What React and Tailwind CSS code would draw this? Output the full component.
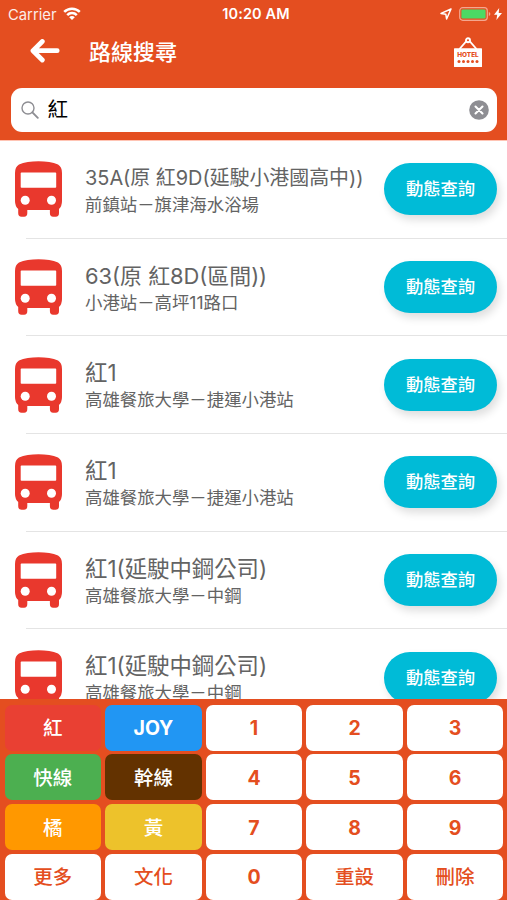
import React from "react";
import clsx from "clsx";

const routes = [
  { name: "35A(原 紅9D(延駛小港國高中))", ends: "前鎮站－旗津海水浴場", size: "text-[19.9px]" },
  { name: "63(原 紅8D(區間))", ends: "小港站－高坪11路口", size: "text-[21.9px]" },
  { name: "紅1", ends: "高雄餐旅大學－捷運小港站", size: "text-[22.4px]" },
  { name: "紅1", ends: "高雄餐旅大學－捷運小港站", size: "text-[22.4px]" },
  { name: "紅1(延駛中鋼公司)", ends: "高雄餐旅大學－中鋼", size: "text-[22.4px]" },
  { name: "紅1(延駛中鋼公司)", ends: "高雄餐旅大學－中鋼", size: "text-[22.4px]" },
];

const white = "bg-white text-[#e44e20]";

const keys = [
  { label: "紅", color: "bg-[#e94033] text-white" },
  { label: "JOY", color: "bg-[#2196f3] text-white" },
  { label: "1", color: white },
  { label: "2", color: white },
  { label: "3", color: white },
  { label: "快線", color: "bg-[#4caf50] text-white" },
  { label: "幹線", color: "bg-[#633200] text-white" },
  { label: "4", color: white },
  { label: "5", color: white },
  { label: "6", color: white },
  { label: "橘", color: "bg-[#ff9800] text-white" },
  { label: "黃", color: "bg-[#edc22b] text-white" },
  { label: "7", color: white },
  { label: "8", color: white },
  { label: "9", color: white },
  { label: "更多", color: white },
  { label: "文化", color: white },
  { label: "0", color: white },
  { label: "重設", color: white },
  { label: "刪除", color: white },
];

function WifiIcon() {
  return (
    <svg className="ml-[6px] h-[13px] w-[18px]" viewBox="0 0 18 13" fill="none" stroke="white" strokeWidth="2.5">
      <path d="M1.2 4.9a11 11 0 0 1 15.6 0" />
      <path d="M4.2 8.1a6.8 6.8 0 0 1 9.6 0" />
      <path d="M9 13 6.2 10.3a3.9 3.9 0 0 1 5.6 0z" fill="white" stroke="none" />
    </svg>
  );
}

function StatusBar() {
  return (
    <div className="grid h-[27px] grid-cols-3 items-center pr-[5px] pl-[8px] text-[15px] text-white">
      <div className="flex items-center">
        <span className="mt-[2px] text-[14.8px] leading-[20px] opacity-90">Carrier</span>
        <WifiIcon />
      </div>
      <span className="pl-[2px] text-center text-[14.5px] font-semibold tracking-[0.1px] whitespace-nowrap">10:20 AM</span>
      <div className="flex items-center justify-end">
        <svg className="mr-[7px] h-[12px] w-[12px]" viewBox="0 0 12 12" fill="none" stroke="white" strokeWidth="1.5" strokeLinejoin="round">
          <path d="M11 1 1 5.4l4.8.8.8 4.8z" />
        </svg>
        <svg className="mr-[3px] h-[14px] w-[32px]" viewBox="0 0 32 14">
          <rect x="0.7" y="0.7" width="27.6" height="12.6" rx="3" fill="none" stroke="#f4a78f" strokeWidth="1.2" />
          <rect x="2.4" y="2.4" width="24.2" height="9.2" rx="1.4" fill="#4cd964" />
          <path d="M29.8 5v4q1.6-.7 1.6-2t-1.6-2z" fill="#f4a78f" />
        </svg>
        <svg className="h-[12px] w-[8px]" viewBox="0 0 8 12" fill="white">
          <path d="M5.2 0 0 6.8h3.2L2.4 12 8 4.900H4.700z" />
        </svg>
      </div>
    </div>
  );
}

function HotelIcon() {
  return (
    <svg className="h-[31px] w-[28px]" viewBox="0 0 28 31">
      <path d="M5.5 12 13 3.5h2L22.500 12" fill="none" stroke="white" strokeWidth="1.8" />
      <circle cx="14" cy="3.300" r="2" fill="#e44e20" stroke="white" strokeWidth="1.900" />
      <rect x="0" y="11.300" width="28" height="18.700" rx="0.600" fill="white" />
      <text x="14" y="20.300" textAnchor="middle" textLength="21.500" lengthAdjust="spacingAndGlyphs" fontSize="6.300" fontWeight="800" fill="#e44e20">
        HOTEL
      </text>
      {[5, 9.5, 14, 18.5, 23].map((x) => (
        <circle key={x} cx={x} cy="24.500" r="1.500" fill="#e44e20" />
      ))}
    </svg>
  );
}

function Header() {
  return (
    <header className="h-[140px] shrink-0 bg-[#e44e20]">
      <StatusBar />
      <div className="flex h-[50px] items-center pr-[25px] pl-[30px]">
        <svg className="h-[26px] w-[30px]" viewBox="0 0 30 26" fill="none" stroke="white" strokeWidth="4.800" strokeLinecap="round" strokeLinejoin="round">
          <path d="M27.200 11.700H3.500M12.300 2.500 3 11.700l9.300 9.300" />
        </svg>
        <h1 className="ml-[29px] text-[22px] leading-[30px] font-medium text-white">路線搜尋</h1>
        <div className="ml-auto">
          <HotelIcon />
        </div>
      </div>
      <div className="mx-[10.500px] mt-[10.500px] flex h-[44px] items-center rounded-[11px] bg-white pr-[8px] pl-[10px]">
        <svg className="h-[18px] w-[18px]" viewBox="0 0 18 18" fill="none" stroke="#8e8e93" strokeWidth="1.400" strokeLinecap="round">
          <circle cx="7" cy="7" r="6" />
          <path d="m11.400 11.400 5.400 5.400" strokeWidth="1.900" />
        </svg>
        <span className="ml-[9px] text-[20.500px] leading-[30px] text-black">紅</span>
        <svg className="ml-auto h-[20px] w-[20px]" viewBox="0 0 20 20">
          <circle cx="10" cy="10" r="9.800" fill="#8e8e93" />
          <path d="m6.500 6.500 7 7m0-7-7 7" stroke="white" strokeWidth="2.100" strokeLinecap="round" />
        </svg>
      </div>
    </header>
  );
}

function BusIcon() {
  return (
    <svg className="mb-[1px] h-[56px] w-[47px] shrink-0" viewBox="0 0 47 56">
      <path
        fill="#e9382d"
        d="M0 12Q0 6 4 3.6C9 .9 16 .2 23.5.2S38 .9 43 3.6Q47 6 47 12v28q0 5-3 8v4q0 3.800-3.300 3.800h-2.600q-3.200 0-3.200-3.800v-3H12.300v3q0 3.800-3.200 3.800H6.500Q3.200 55.800 3.200 52v-4Q0 45 0 40z"
      />
      <rect x="5.700" y="11.600" width="35.500" height="15.200" rx="0.800" fill="white" />
      <circle cx="10.200" cy="39.300" r="4.500" fill="white" />
      <circle cx="36.500" cy="39.300" r="4.500" fill="white" />
    </svg>
  );
}

function RouteRow({ route }) {
  return (
    <li className="h-[97.700px] shrink-0">
      <div className="flex h-full items-center pr-[10px] pl-[15px]">
        <BusIcon />
        <div className="mt-[2px] ml-[23px] flex-1 whitespace-nowrap text-[#636363]">
          <div className={clsx("h-[28px] leading-[28px]", route.size)}>{route.name}</div>
          <div className="h-[26px] text-[17.400px] leading-[26px]">{route.ends}</div>
        </div>
        <button className="mb-[1px] h-[52px] w-[113px] shrink-0 rounded-full bg-[#00bbd7] text-[17.300px] font-medium text-white shadow-[3px_5px_8px_rgba(0,0,0,0.13)]">
          動態查詢
        </button>
      </div>
      <div className="-mt-px ml-[26px] h-px bg-[#e4e4e4]" />
    </li>
  );
}

export default function App() {
  return (
    <div className="flex h-[900px] w-[507px] flex-col overflow-hidden bg-white font-['Inter','Noto_Sans_CJK_TC',sans-serif]">
      <Header />
      <ul className="flex h-[559px] shrink-0 flex-col overflow-hidden border-t border-[#ffc4b4]">
        {routes.map((route, i) => (
          <RouteRow key={i} route={route} />
        ))}
      </ul>
      <div className="grid h-[201px] shrink-0 grid-cols-5 grid-rows-4 gap-[3.800px] bg-[#e44e20] pt-[5.500px] pr-[3.500px] pl-[4.500px]">
        {keys.map((key) => (
          <button
            key={key.label}
            className={clsx(
              "rounded-[7px] pt-[2px] text-[19.500px]",
              /[A-Z0-9]/.test(key.label) ? "font-bold" : "font-medium",
              key.color
            )}
          >
            {key.label}
          </button>
        ))}
      </div>
    </div>
  );
}
